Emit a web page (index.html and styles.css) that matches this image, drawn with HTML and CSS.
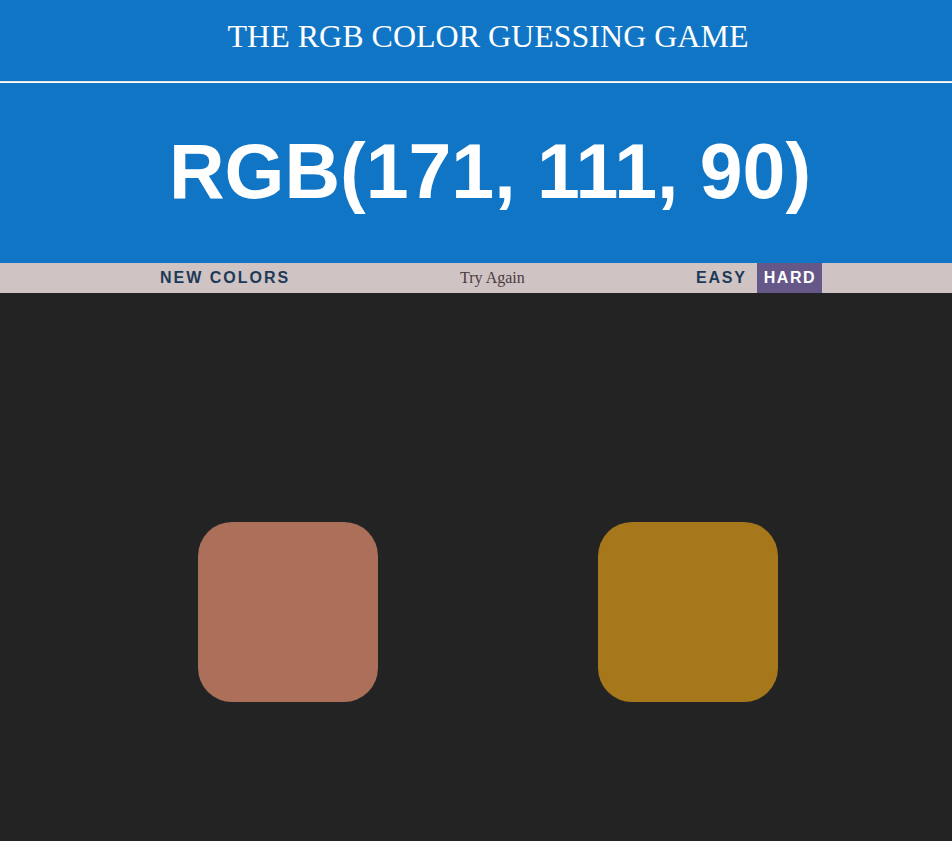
FILE: index.html
```html
<!DOCTYPE html>
<html>
<head>
<meta charset="utf-8">
<link rel="stylesheet" href="styles.css">
</head>
<body>
<header class="top">
  <h1 class="title">THE RGB COLOR GUESSING GAME</h1>
  <div class="rule"></div>
  <div class="rgb">RGB(171, 111, 90)</div>
</header>
<nav class="bar">
  <div class="bar-inner">
    <button class="btn new">NEW COLORS</button>
    <span class="msg">Try Again</span>
    <div class="modes">
      <button class="btn mode easy">EASY</button>
      <button class="btn mode selected">HARD</button>
    </div>
  </div>
</nav>
<main class="board">
  <div class="square" style="background:#232323"></div>
  <div class="square" style="background:#232323"></div>
  <div class="square" style="background:#232323"></div>
  <div class="square" style="background:#ab6f5a"></div>
  <div class="square" style="background:#232323"></div>
  <div class="square" style="background:#a6781b"></div>
</main>
</body>
</html>
```

FILE: styles.css
```css
html, body { margin: 0; padding: 0; }
body { background: #232323; width: 952px; height: 841px; overflow: hidden; }
.top { background: #1175c6; color: #fff; text-align: center; }
.title {
  margin: 0; height: 81px; box-sizing: border-box; padding: 18px 0 0 24px;
  font-family: "Liberation Serif", serif; font-weight: normal; font-size: 32px; line-height: 36px;
}
.rule { height: 1px; background: #e6e6e6; border-bottom: 1px solid #ffffff; }
.rgb {
  height: 180px; display: flex; align-items: center; justify-content: center;
  font-family: "Liberation Sans", Arial, sans-serif; font-weight: bold;
  font-size: 77px; padding: 0 0 4px 28px; box-sizing: border-box;
}
.bar { background: #cfc3c3; height: 30px; }
.bar-inner { width: 662px; margin-left: 160px; height: 30px; display: flex; align-items: center; }
.btn {
  border: none; background: none; padding: 0; margin: 0; height: 30px;
  font-family: "Liberation Sans", Arial, sans-serif; font-weight: bold; font-size: 16px;
  letter-spacing: 2px; color: #1c3a58; cursor: pointer;
}
.new { width: 300px; text-align: left; }
.msg { font-family: "Liberation Serif", serif; font-size: 16px; color: #4b3b3f; }
.modes { display: flex; margin-left: auto; }
.easy { margin-right: 10px; letter-spacing: 1.8px; }
.selected { background: #655787; color: #fff; letter-spacing: 1.5px; padding: 0 6px 0 7px; }
.board { width: 600px; margin: 19px 0 0 188px; display: flex; flex-wrap: wrap; }
.square { width: 180px; height: 180px; margin: 10px; border-radius: 34px; }
```
